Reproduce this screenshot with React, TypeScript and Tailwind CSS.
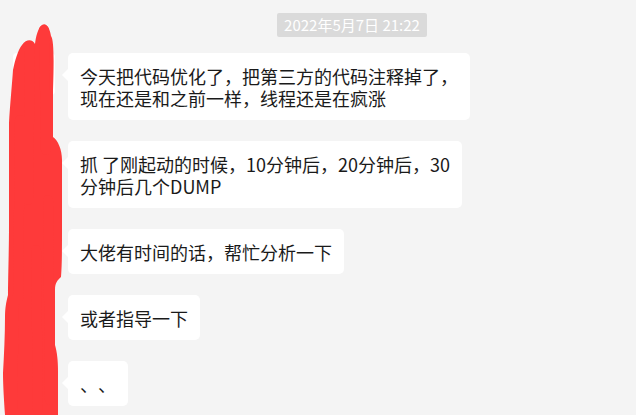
import React from 'react';

const messages: string[][] = [
  ['今天把代码优化了，把第三方的代码注释掉了，', '现在还是和之前一样，线程还是在疯涨'],
  ['抓 了刚起动的时候，10分钟后，20分钟后，30', '分钟后几个DUMP'],
  ['大佬有时间的话，帮忙分析一下'],
  ['或者指导一下'],
  ['、、'],
];

// red marker scribble hiding the avatars
function Scribble() {
  return (
    <svg
      className="absolute left-0 top-0"
      width="72"
      height="415"
      viewBox="0 0 72 415"
    >
      <path
        d="M42 25 C46 22 50 28 51 36 C54 40 54 60 53 90 C53 110 53 125 53 137 C58 140 62 150 62 160 L62 230 C62 250 62 265 61 277 C58 280 55 282 55 290 L55 345 C57 352 58 360 58 372 L58 415 L5 415 C4 400 3 385 3 373 C4 355 5 335 5 317 C5 308 6 303 8 295 C8 280 9 250 9 225 C9 190 9 150 9 123 C10 105 12 85 13 70 C15 60 18 50 22 45 C27 38 33 40 35 44 C36 36 38 28 42 25 Z"
        fill="#fe3a3a"
      />
      <path
        d="M44 30 L46 150 M30 48 L28 200 M20 120 L18 300 M48 200 L50 400 M14 300 L12 410 M36 250 L38 410"
        stroke="#fe3a3a"
        strokeWidth="10"
        strokeLinecap="round"
        fill="none"
      />
    </svg>
  );
}

function Bubble({ lines }: { lines: string[] }) {
  return (
    <div className="flex items-start">
      <div className="w-[42px] h-[42px] ml-[13px] mr-[13px] bg-white rounded-sm shrink-0" />
      <div className="relative bg-white rounded-[5px] px-3 py-[11.5px] max-w-[404px] text-[18px] leading-[22px] text-[#1a1a1a] whitespace-nowrap [text-spacing-trim:space-all]">
        <div className="absolute -left-[6px] top-[16px] w-0 h-0 border-y-[6px] border-y-transparent border-r-[6px] border-r-white" />
        {lines.map((line, i) => (
          <div key={i}>{line}</div>
        ))}
      </div>
    </div>
  );
}

export default function App() {
  return (
    <div
      className="relative w-[636px] h-[415px] overflow-hidden bg-[#f4f4f4]"
      style={{ fontFamily: '"Noto Sans CJK SC", "Noto Sans", sans-serif' }}
    >
      <div className="flex justify-center pl-[68px] pt-[13px]">
        <div className="bg-[#dadada] text-white text-[15px] leading-[24px] px-[7px] rounded-[2px]">
          2022年5月7日 21:22
        </div>
      </div>

      <div className="flex flex-col gap-[21px] mt-[16px]">
        {messages.map((m, i) => (
          <Bubble key={i} lines={m} />
        ))}
      </div>

      <Scribble />
    </div>
  );
}
